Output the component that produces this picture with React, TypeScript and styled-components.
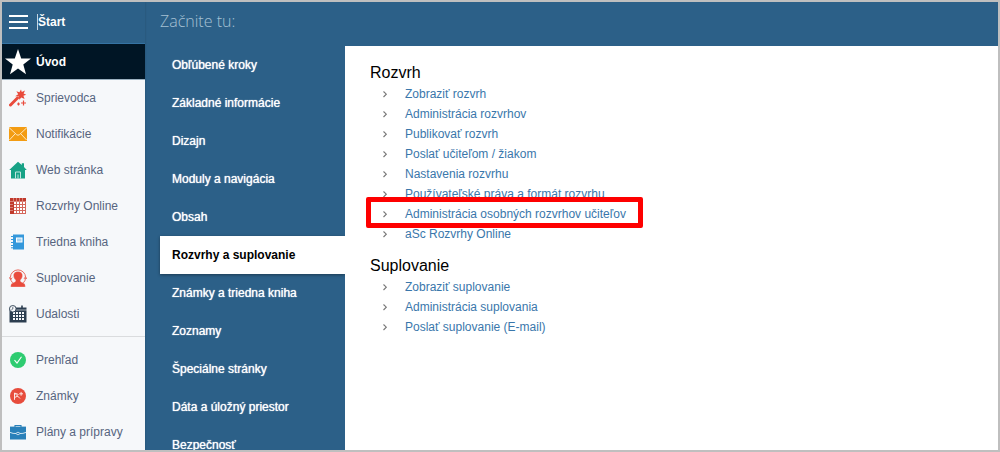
import React from 'react';
import styled, { createGlobalStyle, css } from 'styled-components';

const GlobalStyle = createGlobalStyle`
  *, *::before, *::after { box-sizing: border-box; }
  body { margin: 0; font-family: Arial, "Liberation Sans", sans-serif; font-size: 12px; }
  ul { list-style: none; margin: 0; padding: 0; }
  a { text-decoration: none; }
`;

const Frame = styled.div`
  display: flex;
  height: 100vh;
  overflow: hidden;
  border: 2px solid #bfbfbf;
  background: #2c6088;
`;

const Sidebar = styled.aside`
  flex: 0 0 143px;
  background: #f6f8fa;
  box-shadow: 0 0 2px rgba(0, 0, 0, 0.2);
`;

const SidebarHeader = styled.div`
  display: flex;
  align-items: center;
  height: 42px;
  padding: 0 0 2px 7px;
  gap: 9px;
  background: #2c6088;
  border-bottom: 1px solid #3573a3;
`;

const MenuButton = styled.button`
  display: flex;
  width: 19px;
  padding: 0;
  border: 0;
  background: none;
  cursor: pointer;
`;

const StartLabel = styled.span`
  display: flex;
  align-items: center;
  height: 16px;
  border-left: 1px solid #c5d5e2;
  color: #fff;
  font-weight: bold;
`;

const SideLink = styled.a<{ $active?: boolean }>`
  display: flex;
  align-items: center;
  height: 36px;
  padding-left: 3px;
  gap: 5px;
  color: #56657f;

  ${({ $active }) =>
    $active &&
    css`
      background: #001525;
      border-bottom: 1px solid #9bb0c0;
      color: #fff;
      font-weight: bold;
    `}
`;

const IconSlot = styled.span`
  display: flex;
  align-items: center;
  justify-content: center;
  width: 26px;
  height: 26px;
`;

const SideGroup = styled.ul`
  & + & {
    margin-top: 4px;
    padding-top: 5px;
    border-top: 1px solid #dadcde;
  }
`;

const Content = styled.div`
  display: flex;
  flex-direction: column;
  flex: 1;
  min-width: 0;
  padding-left: 15px;
`;

const PageTitle = styled.h1`
  flex: 0 0 44px;
  margin: 0;
  color: #a6c0d3;
  font: 300 16px/38px "Open Sans", sans-serif;
`;

const Columns = styled.div`
  display: flex;
  flex: 1;
  min-height: 0;
`;

const SectionNav = styled.nav`
  flex: 0 0 185px;
`;

const SectionLink = styled.a<{ $active?: boolean }>`
  display: flex;
  align-items: center;
  height: 38px;
  padding-left: 12px;
  color: #fff;
  text-shadow: 0 0 1px #fff;

  ${({ $active }) =>
    $active &&
    css`
      background: #fff;
      color: #000;
      font-weight: bold;
      text-shadow: none;
      box-shadow: 0 1px 3px rgba(0, 0, 0, 0.4);
    `}
`;

const Main = styled.main`
  position: relative;
  flex: 1;
  min-width: 0;
  padding: 16px 25px;
  background: #fff;
`;

const Group = styled.section`
  & + & { margin-top: 11px; }
`;

const GroupTitle = styled.h2`
  margin: 0;
  color: #000;
  font-size: 16px;
  font-weight: normal;
  line-height: 22px;
`;

const StepItem = styled.li`
  display: flex;
  align-items: center;
  height: 20px;
  padding-left: 12px;
  gap: 17px;
`;

const StepLink = styled.a<{ $marked?: boolean }>`
  position: relative;
  color: #3a77ab;
  line-height: 20px;

  ${({ $marked }) =>
    $marked &&
    css`
      &::after {
        content: "";
        position: absolute;
        inset: -7px -17px -4px -39px;
        border: 5px solid #fe0000;
        border-radius: 2px;
      }
    `}
`;

const StarIcon = () => (
  <svg width="26" height="26" viewBox="0 0 26 26">
    <path d="M13 0 16.2 9.4H26L18.3 15.4 21 25.3 13 19.6 5 25.3 7.7 15.4 0 9.4H9.8Z" fill="#fff" />
  </svg>
);

const WandIcon = () => (
  <svg width="18" height="18" viewBox="0 0 18 18">
    <path d="M1.500 16 8.500 9" stroke="#e94b3c" strokeWidth="3" strokeLinecap="round" />
    <path
      d="M12 0.5 12.8 3.1 16 1.4 14.6 4.4 17.2 5.8 14.4 6.7 15.6 10 12.3 8.4 10.3 10.8 9.8 7.6 6.2 7.2 9.2 5.2 7.4 2.2 10.4 3.2Z"
      fill="#e94b3c"
    />
    <path d="M14.5 11.5v5M12 14h5M9.5 13.5v3M8 15h3" stroke="#e94b3c" strokeWidth="1.2" />
  </svg>
);

const MailIcon = () => (
  <svg width="18" height="14" viewBox="0 0 18 14">
    <path d="M0 0h18v14H0z" fill="#f39c12" />
    <path d="M0 0.5 7.5 7.6Q9 8.9 10.5 7.6L18 0.5M0.4 13 6.3 6.7M17.6 13 11.7 6.7" fill="none" stroke="#fff0d5" strokeWidth="0.9" />
  </svg>
);

const HouseIcon = () => (
  <svg width="18" height="18" viewBox="0 0 18 18">
    <path d="M9 0.7 12.8 4V2.2H15V6L17.8 9H16v8.5H2V9H0.2Z" fill="#17a286" />
    <path d="M6.5 17.500v-6.500h5v6.500M9 13.500V17.500" fill="none" stroke="#bfe6dd" strokeWidth="1" />
  </svg>
);

const TimetableIcon = () => (
  <svg width="16" height="16" viewBox="0 0 16 16">
    <path d="M0 0h16v16H0z" fill="#d4665b" />
    <path d="M0 0h16v4H0zM0 4h4v12H0z" fill="#c0392b" />
    {[4, 7, 10, 13].flatMap((y) =>
      [4, 7, 10, 13].map((x) => <rect key={`${x}-${y}`} x={x} y={y} width="2" height="2" fill="#fff" />),
    )}
    <path d="M3.5 0v3M6.5 0v3M9.5 0v3M12.5 0v3M0 3.5h16M0 6.5h3M0 9.5h3M0 12.5h3" stroke="#e9b2ac" strokeWidth="0.6" />
  </svg>
);

const BookIcon = () => (
  <svg width="14" height="16" viewBox="0 0 14 16">
    <path d="M2 0.5h11v15H2z" fill="#3498db" />
    <path d="M0 2.5h2M0 5.5h2M0 8.5h2M0 11.5h2M0 13.8h2" stroke="#3498db" strokeWidth="1" />
    <path d="M5 3.5h6.5v5H5z" fill="#fff" />
    <path d="M6 4.500h4.500v3H6z" fill="#a9d4f1" />
  </svg>
);

const PersonIcon = () => (
  <svg width="18" height="18" viewBox="0 0 18 18">
    <circle cx="9" cy="8.5" r="7.6" fill="none" stroke="#e9685c" strokeWidth="1" />
    <path d="M0.200 8.200 1.600 10.800 3.200 8.600M15 10 16.500 7.600 17.800 10" fill="none" stroke="#e9685c" strokeWidth="0.9" />
    <path
      d="M9 2.400c3.400 0 4.900 2.200 4.500 4.800-.2 1.700-1.100 2.900-2 3.800v1.300c.6 1.200 3.500 1.300 4.400 3 .3.7.4 1.500.4 2.700H1.700c0-1.200.1-2 .4-2.700.9-1.700 3.800-1.800 4.400-3V11c-.9-.9-1.800-2.100-2-3.800C4.100 4.600 5.600 2.400 9 2.400Z"
      fill="#e94b3c"
      stroke="#f6f8fa"
      strokeWidth="0.3"
    />
  </svg>
);

const CalendarIcon = () => (
  <svg width="18" height="18" viewBox="0 0 18 18">
    <path d="M0.5 2.500H17.500V17.500H0.5z" fill="#2c3e50" />
    <path d="M7 5h11" stroke="#f6f8fa" strokeWidth="0.6" />
    <path d="M13 0.5v3" stroke="#2c3e50" strokeWidth="1.6" />
    {[7, 10, 13].flatMap((y) =>
      [4, 7, 10, 13].map((x) => <rect key={`${x}-${y}`} x={x} y={y} width="2" height="2" fill="#f6f8fa" />),
    )}
    <circle cx="3.8" cy="3.8" r="3.3" fill="#f6f8fa" stroke="#2c3e50" strokeWidth="0.9" />
    <path d="M3.8 1.8v2.2l-1.500 1" fill="none" stroke="#2c3e50" strokeWidth="0.7" />
  </svg>
);

const CheckIcon = () => (
  <svg width="16" height="16" viewBox="0 0 16 16">
    <circle cx="8" cy="8" r="8" fill="#2ecc71" />
    <path d="M4.5 8.2 7 11 11.5 4.8" fill="none" stroke="#fff" strokeWidth="1.1" />
  </svg>
);

const GradeIcon = () => (
  <svg width="16" height="16" viewBox="0 0 16 16">
    <circle cx="8" cy="8" r="8" fill="#e74c3c" />
    <path d="M4.500 11.800V5L10 10.500M4.500 9.500 8 8M4.500 5 8.500 6.500M9.200 5.800h3.800M11.100 3.900v3.800" fill="none" stroke="#fde8e5" strokeWidth="1" />
  </svg>
);

const BriefcaseIcon = () => (
  <svg width="16" height="16" viewBox="0 0 16 16">
    <path d="M5 3V1.5h6V3" fill="none" stroke="#2980b9" strokeWidth="1.1" />
    <path d="M0 2.6h16V15.5H0z" fill="#2980b9" />
    <path d="M0 8.4Q3 9.8 6.3 9.5M16 8.4Q13 9.8 9.7 9.5" fill="none" stroke="#e4eff6" strokeWidth="0.9" />
    <ellipse cx="8" cy="9.5" rx="1.7" ry="1.2" fill="#2980b9" stroke="#e4eff6" strokeWidth="0.8" />
  </svg>
);

const Chevron = () => (
  <svg width="6" height="8" viewBox="0 0 6 8" aria-hidden="true">
    <path d="M1.5 1.5 4.300 4.200 1.5 7" fill="none" stroke="#777" strokeWidth="1.1" />
  </svg>
);

const sideGroups = [
  [
    { label: 'Úvod', icon: <StarIcon />, active: true },
    { label: 'Sprievodca', icon: <WandIcon /> },
    { label: 'Notifikácie', icon: <MailIcon /> },
    { label: 'Web stránka', icon: <HouseIcon /> },
    { label: 'Rozvrhy Online', icon: <TimetableIcon /> },
    { label: 'Triedna kniha', icon: <BookIcon /> },
    { label: 'Suplovanie', icon: <PersonIcon /> },
    { label: 'Udalosti', icon: <CalendarIcon /> },
  ],
  [
    { label: 'Prehľad', icon: <CheckIcon /> },
    { label: 'Známky', icon: <GradeIcon /> },
    { label: 'Plány a prípravy', icon: <BriefcaseIcon /> },
  ],
];

const sections = [
  'Obľúbené kroky',
  'Základné informácie',
  'Dizajn',
  'Moduly a navigácia',
  'Obsah',
  'Rozvrhy a suplovanie',
  'Známky a triedna kniha',
  'Zoznamy',
  'Špeciálne stránky',
  'Dáta a úložný priestor',
  'Bezpečnosť',
];
const activeSection = 'Rozvrhy a suplovanie';

const groups = [
  {
    title: 'Rozvrh',
    steps: [
      'Zobraziť rozvrh',
      'Administrácia rozvrhov',
      'Publikovať rozvrh',
      'Poslať učiteľom / žiakom',
      'Nastavenia rozvrhu',
      'Používateľské práva a formát rozvrhu',
      'Administrácia osobných rozvrhov učiteľov',
      'aSc Rozvrhy Online',
    ],
  },
  {
    title: 'Suplovanie',
    steps: ['Zobraziť suplovanie', 'Administrácia suplovania', 'Poslať suplovanie (E-mail)'],
  },
];
const markedStep = 'Administrácia osobných rozvrhov učiteľov';

export default function App() {
  return (
    <>
      <GlobalStyle />
      <Frame>
        <Sidebar>
          <SidebarHeader>
            <MenuButton aria-label="Menu">
              <svg width="19" height="14" viewBox="0 0 19 14">
                <path d="M0 1h19M0 7h19M0 13h19" stroke="#fff" strokeWidth="2" />
              </svg>
            </MenuButton>
            <StartLabel>Štart</StartLabel>
          </SidebarHeader>
          {sideGroups.map((items, index) => (
            <SideGroup key={index}>
              {items.map((item) => (
                <li key={item.label}>
                  <SideLink href="#" $active={'active' in item}>
                    <IconSlot>{item.icon}</IconSlot>
                    {item.label}
                  </SideLink>
                </li>
              ))}
            </SideGroup>
          ))}
        </Sidebar>
        <Content>
          <PageTitle>Začnite tu:</PageTitle>
          <Columns>
            <SectionNav>
              {sections.map((label) => (
                <SectionLink key={label} href="#" $active={label === activeSection}>
                  {label}
                </SectionLink>
              ))}
            </SectionNav>
            <Main>
              {groups.map((group) => (
                <Group key={group.title}>
                  <GroupTitle>{group.title}</GroupTitle>
                  <ul>
                    {group.steps.map((step) => (
                      <StepItem key={step}>
                        <Chevron />
                        <StepLink href="#" $marked={step === markedStep}>
                          {step}
                        </StepLink>
                      </StepItem>
                    ))}
                  </ul>
                </Group>
              ))}
            </Main>
          </Columns>
        </Content>
      </Frame>
    </>
  );
}
